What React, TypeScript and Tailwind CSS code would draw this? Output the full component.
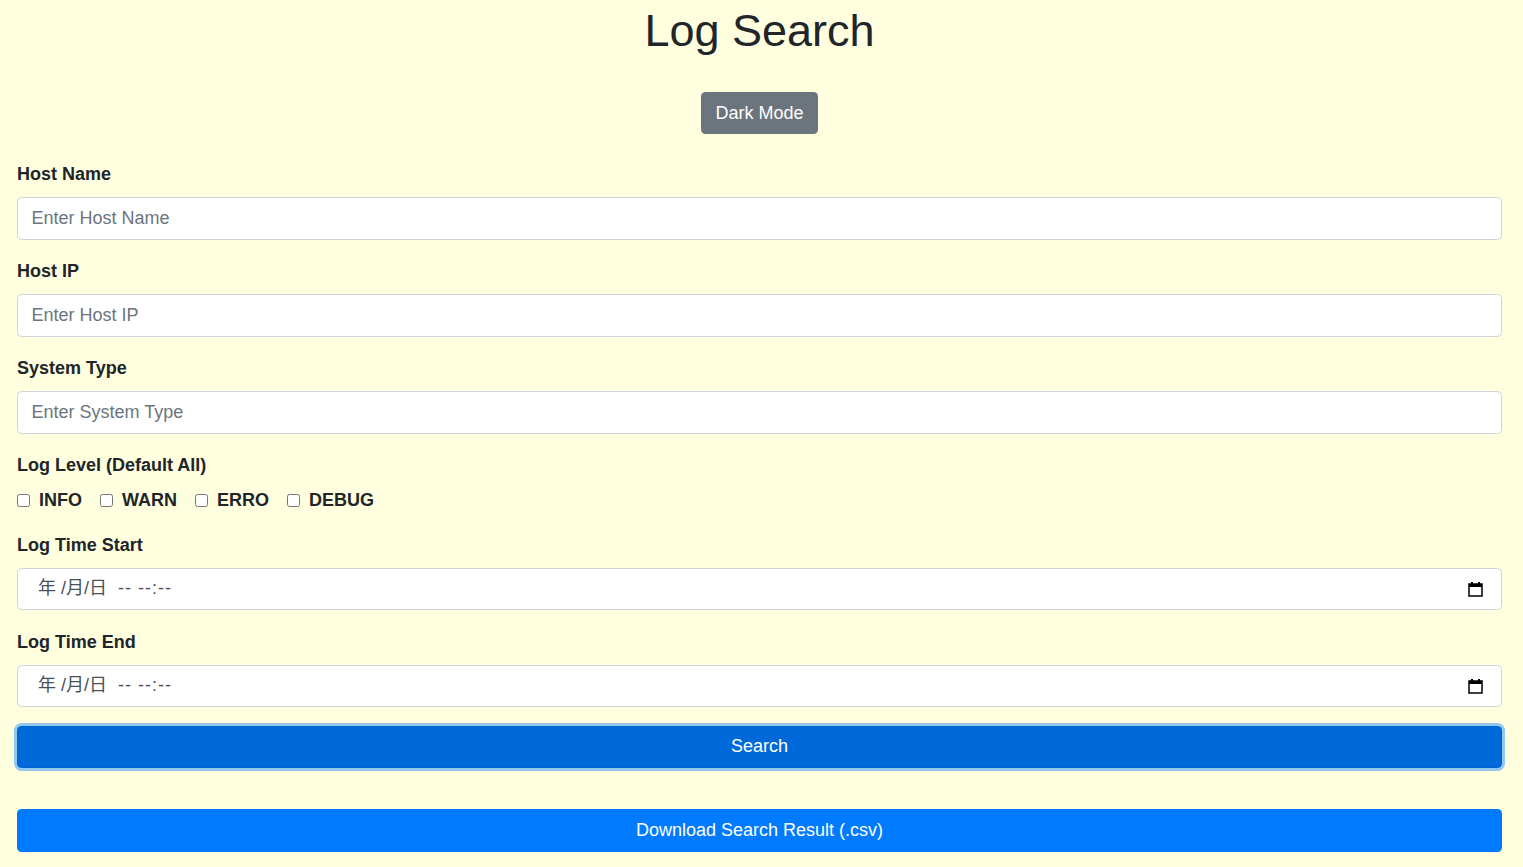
import React from 'react';

const font = { fontFamily: '"Liberation Sans", Arial, "Noto Sans CJK SC", sans-serif' };

const Field = ({ label, placeholder }: { label: string; placeholder: string }) => (
  <div className="mb-[18.5px]">
    <label className="block font-bold leading-[27px] mb-[9px]">{label}</label>
    <input
      type="text"
      placeholder={placeholder}
      className="block w-full h-[42.5px] px-[13.5px] bg-white border border-[#ced4da] rounded-[4.5px] text-[18px] text-[#495057] placeholder:text-[#6c757d] outline-none"
    />
  </div>
);

const CalendarIcon = () => (
  <svg width="15" height="16" viewBox="0 0 15 16" fill="none">
    <rect x="1" y="3" width="13" height="12" stroke="#000" strokeWidth="1.5" />
    <rect x="1" y="3" width="13" height="3" fill="#000" />
    <rect x="3" y="1" width="2" height="3" fill="#000" />
    <rect x="10" y="1" width="2" height="3" fill="#000" />
  </svg>
);

const DateField = ({ label }: { label: string }) => (
  <div className="mb-[18.5px]">
    <label className="block font-bold leading-[27px] mb-[9px]">{label}</label>
    <div className="flex items-center justify-between w-full h-[42.5px] pl-[20px] pr-[18px] bg-white border border-[#ced4da] rounded-[4.5px] text-[18px] text-[#495057]">
      <span>
        年 /月/日<span className="ml-[11px] tracking-[1px]">-- --:--</span>
      </span>
      <CalendarIcon />
    </div>
  </div>
);

const levels = ['INFO', 'WARN', 'ERRO', 'DEBUG'];

export default function App() {
  return (
    <div className="min-h-screen bg-[#ffffe0] text-[#212529] text-[18px] leading-[27px]" style={font}>
      <div className="pl-[17px] pr-[21px]">
        <h1 className="text-center text-[45px] leading-[54px] font-medium pt-[4px] mb-[9px]">Log Search</h1>
        <div className="flex justify-center mt-[34px] mb-[27px]">
          <button className="h-[42px] px-[14.5px] bg-[#6c757d] text-white rounded-[4.5px] text-[18px]">Dark Mode</button>
        </div>

        <Field label="Host Name" placeholder="Enter Host Name" />
        <Field label="Host IP" placeholder="Enter Host IP" />
        <Field label="System Type" placeholder="Enter System Type" />

        <div className="mb-[17.5px]">
          <label className="block font-bold leading-[27px] mb-[8px]">Log Level (Default All)</label>
          <div className="flex items-center h-[27px] gap-[18px]">
            {levels.map((lv) => (
              <label key={lv} className="flex items-center gap-[9px] font-bold">
                <input type="checkbox" className="m-0 w-[13px] h-[13px]" />
                <span>{lv}</span>
              </label>
            ))}
          </div>
        </div>

        <DateField label="Log Time Start" />
        <DateField label="Log Time End" />

        <button className="block w-full h-[42.5px] bg-[#0069d9] border border-[#0062cc] text-white rounded-[4.5px] text-[18px] ring-[3px] ring-[#268fff]/50">
          Search
        </button>

        <button className="block w-full h-[42.5px] mt-[41px] bg-[#007bff] text-white rounded-[4.5px] text-[18px]">
          Download Search Result (.csv)
        </button>
      </div>
    </div>
  );
}
